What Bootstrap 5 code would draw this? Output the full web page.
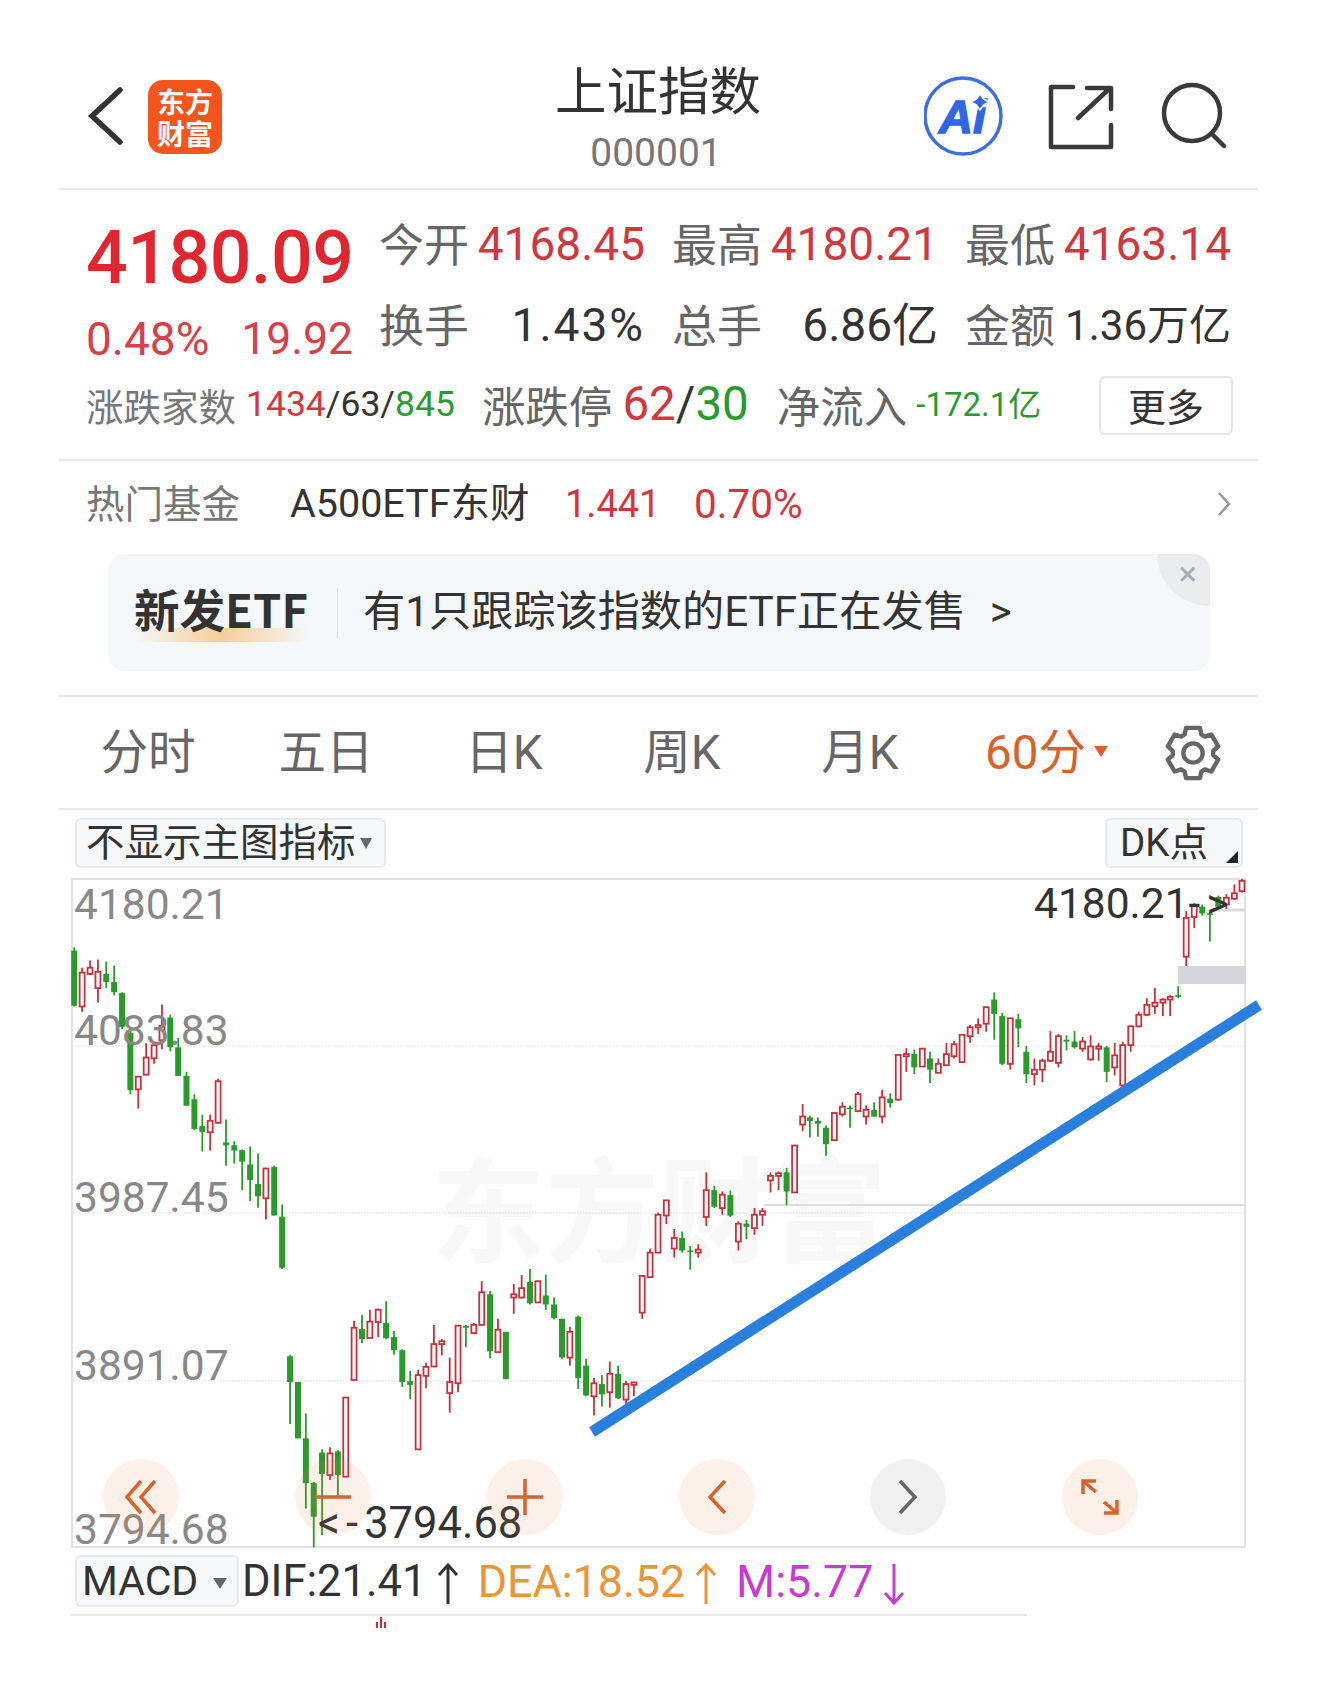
<!DOCTYPE html>
<html lang="zh">
<head>
    <meta charset="utf-8">
    <title>上证指数</title>
    <link href="https://cdn.jsdelivr.net/npm/bootstrap@5.3.0/dist/css/bootstrap.min.css" rel="stylesheet">
    <style>
        body { background: #fff; font-family: Roboto, "Noto Sans CJK SC", sans-serif; color: #333; overflow-x: hidden; }
        .page-wrap { width: 1199px; margin-left: 59px; height: 1685px; }
        .sep { border-bottom: 2px solid #e8e8e8; }

        .head-bar { height: 190px; padding: 0 28px; position: relative; }
        .back-ico { width: 36px; height: 58px; margin-top: 87px; }
        .logo-box { width: 74px; height: 74px; margin-left: 25px; margin-top: 80px; background: #f4551d; border-radius: 15px; color: #fff; font: 700 28px/32px "Noto Sans CJK SC", sans-serif; text-align: center; padding-top: 5px; }
        .head-title { position: absolute; left: 400px; width: 400px; top: 56px; text-align: center; }
        .head-title .t1 { font: 400 51.5px/64px "Noto Sans CJK SC", sans-serif; color: #333; margin-left: -2px; }
        .head-title .t2 { font-size: 39px; line-height: 46px; color: #777; margin-top: 10px; margin-left: -6px; }
        .head-icons { position: absolute; top: 75px; left: 865px; }

        .quote-sec { height: 271px; position: relative; padding: 18px 27px 0; }
        .price-big { font-size: 73.5px; line-height: 80px; font-weight: 500; color: #e0262e; letter-spacing: -.5px; margin-top: 10px; white-space: nowrap; }
        .price-sub { font-size: 46px; line-height: 50px; color: #d6404a; width: 267px; margin-top: 16px; }
        .price-sub .alt { font-size: 44.5px; }
        .quote-left { width: 294px; }
        .quote-grid { display: grid; grid-template-columns: 293px 293px 266px; grid-auto-rows: 81px; margin-top: -4px; }
        .q-cell { display: flex; justify-content: space-between; align-items: center; padding-right: 27px; height: 81px; font-size: 46px; white-space: nowrap; }
        .q-cell:nth-child(3n) { padding-right: 0; }
        .q-label { font: 400 45px/1 "Noto Sans CJK SC", sans-serif; color: #666; margin-bottom: 4px; }
        .c-red { color: #d1373f; }
        .c-green { color: #2a9a2f; }
        .c-dark { color: #333; }
        .wide-num { letter-spacing: 2px; }
        .q-amt { font-size: 42px; }
        .q-row3 { position: absolute; left: 27px; right: 25px; top: 186px; height: 58px; }
        .q-row3 .lb { color: #777; font: 400 37.5px/1 "Noto Sans CJK SC", sans-serif; }
        .q-row3 .nums { font-size: 35.5px; margin-left: 10px; margin-right: 27px; }
        .q-row3 .lb2 { color: #666; font: 400 43.5px/1 "Noto Sans CJK SC", sans-serif; }
        .q-row3 .big-num { font-size: 47.5px; margin-left: 10px; margin-right: 28px; }
        .q-row3 .flow { font-size: 33px; margin-left: 9px; }
        .more-btn { width: 134px; height: 59px; margin-left: auto; border: 2px solid #e6e6e6; border-radius: 6px; font: 400 38px/50px "Noto Sans CJK SC", sans-serif; color: #333; padding: 0; background: #fff; }

        .fund-sec { height: 236px; position: relative; }
        .fund-row { height: 86px; padding: 0 27px; font-size: 38px; white-space: nowrap; }
        .fund-row .lb { color: #777; font: 400 38.5px/1 "Noto Sans CJK SC", sans-serif; width: 204px; margin-bottom: 6px; }
        .fund-row .nm { width: 275px; color: #333; font-size: 39.5px; }
        .fund-row .v1 { width: 129px; }
        .fund-row .v2 { font-size: 40.5px; }
        .etf-box { position: relative; margin: 7px 48px 0 49px; height: 117px; background: #f5f8fa; border-radius: 16px; overflow: hidden; padding-left: 26px; }
        .etf-tag { position: relative; font: 700 45.5px/1 "Noto Sans CJK SC", sans-serif; color: #333; width: 203px; white-space: nowrap; }
        .etf-tag::after { content: ""; position: absolute; left: 0; right: 28px; bottom: -7px; height: 14px; background: linear-gradient(90deg, rgba(247,190,120,0) 0%, rgba(247,190,120,.75) 50%, rgba(247,190,120,0) 100%); }
        .etf-tag span { position: relative; z-index: 1; top: -4px; }
        .etf-line { width: 1px; height: 50px; background: #dcdfe1; margin-right: 25px; }
        .etf-txt { font: 400 42.2px/1 Roboto, "Noto Sans CJK SC", sans-serif; color: #333; white-space: nowrap; }
        .etf-close { position: absolute; right: 0; top: 0; width: 53px; height: 52px; background: #e9edef; border-bottom-left-radius: 53px 52px; color: #a8adb0; font-size: 34px; line-height: 38px; text-align: right; padding-right: 13px; }

        .tab-bar { height: 113px; }
        .tab-item { width: 178px; text-align: center; font: 400 47.5px/1 Roboto, "Noto Sans CJK SC", sans-serif; color: #666; white-space: nowrap; padding-top: 3px; }
        .tab-item.on { color: #d9622b; padding-left: 17px; }
        .tab-caret { display: inline-block; border: 7px solid transparent; border-top: 11px solid #d9622b; border-bottom: 0; vertical-align: 12px; margin-left: 8px; }
        .gear-ico { margin-left: 37px; }

        .tool-row { height: 68px; position: relative; padding: 8px 15px 0 16px; }
        .tool-btn { height: 50px; background: #f6f8f9; border: 2px solid #e6eaec; border-radius: 6px; font: 400 38.5px/46px Roboto, "Noto Sans CJK SC", sans-serif; color: #333; padding: 0 0 0 9px; white-space: nowrap; position: relative; }
        .tool-caret { display: inline-block; border: 6px solid transparent; border-top: 11px solid #666; border-bottom: 0; vertical-align: 7px; margin-left: 4px; margin-right: 12px; }
        .dk-btn { width: 138px; padding-left: 13px; text-align: left; }
        .dk-corner { position: absolute; right: 3px; bottom: 3px; border-left: 12px solid transparent; border-bottom: 12px solid #222; }

        .chart-box { position: relative; margin-left: 12px; width: 1175px; height: 670px; border: 2px solid #e2e2e2; }
        .chart-box svg.plot { position: absolute; left: -2px; top: -2px; overflow: visible; }
        .watermark { position: absolute; left: 358px; top: 267px; font: 700 114px/1 "Noto Sans CJK SC", sans-serif; color: #f8f8f8; white-space: nowrap; }
        .ax-lab { position: absolute; left: 1px; font-size: 42.5px; line-height: 50px; color: #888; }
        .call-lab { position: absolute; font-size: 42.5px; line-height: 50px; color: #333; white-space: nowrap; }
        .call-lab .gap-sp { letter-spacing: 6px; }
        .call-low { font-size: 43.5px; }
        .round-btn { position: absolute; top: 579px; width: 76px; height: 76px; border-radius: 50%; background: rgba(240,130,70,.12); display: flex; align-items: center; justify-content: center; padding: 0; border: 0; }
        .round-btn.off { background: rgba(120,120,120,.1); }

        .macd-row { height: 66px; padding: 7px 0 0 16px; font-size: 44.8px; white-space: nowrap; }
        .macd-row .m-val { line-height: 54px; }
        .macd-row .m-dif { font-size: 43.6px; }
        .macd-btn { width: 164px; height: 52px; background: #f6f8f9; border: 2px solid #e6eaec; border-radius: 6px; font: 400 41px/48px Roboto, sans-serif; color: #333; padding: 0 0 0 5px; margin-right: 3px; text-align: left; }
        .macd-caret { display: inline-block; border: 7px solid transparent; border-top: 11px solid #666; border-bottom: 0; vertical-align: 6px; margin-left: 15px; }
        .m-arrow { margin: 8px 19px 0 10px; }
        .c-dea { color: #e8963a; }
        .c-m { color: #c93bd0; }
        .sub-line { margin-left: 12px; width: 956px; border-top: 2px solid #e8e8e8; height: 14px; position: relative; overflow: hidden; }
        .sub-bar { position: absolute; left: 295px; top: 0; }
    </style>
</head>
<body>
<div class="page-wrap">

    <!-- 상단 -->
    <div class="head-bar sep d-flex align-items-start">
        <svg class="back-ico" viewBox="0 0 36 58"><polyline points="33,3 5,29 33,55" fill="none" stroke="#333" stroke-width="5.5" stroke-linecap="round"/></svg>
        <div class="logo-box">东方<br>财富</div>
        <div class="head-title">
            <div class="t1">上证指数</div>
            <div class="t2">000001</div>
        </div>
        <div class="head-icons d-flex align-items-center">
            <svg width="305" height="82" viewBox="0 0 305 82">
                <circle cx="39" cy="41" r="38" fill="#fff" stroke="#3d6fe0" stroke-width="3.5"/>
                <text x="15" y="58" font-family="Liberation Sans" font-weight="700" font-style="italic" font-size="47" fill="#2f66e6" stroke="#2f66e6" stroke-width="1.5">Ai</text>
                <polygon points="56,19 59.5,24 65,27 59.5,30 56,35 52.500,30 47,27 52.500,24" fill="#2f66e6" stroke="#fff" stroke-width="1.500"/>
                <path d="M149 12H127V72H187V50" fill="none" stroke="#3a3a3a" stroke-width="4.500" stroke-linecap="round" stroke-linejoin="round"/>
                <path d="M154 43L185 14M163 13H187V34" fill="none" stroke="#3a3a3a" stroke-width="4.500" stroke-linecap="round" stroke-linejoin="round"/>
                <circle cx="268" cy="38" r="28" fill="none" stroke="#3a3a3a" stroke-width="4.500"/>
                <line x1="288" y1="59" x2="300" y2="71" stroke="#3a3a3a" stroke-width="4.500" stroke-linecap="round"/>
            </svg>
        </div>
    </div>

    <!-- 시세 -->
    <div class="quote-sec sep d-flex">
        <div class="quote-left">
            <div class="price-big">4180.09</div>
            <div class="price-sub d-flex justify-content-between"><span>0.48%</span><span class="alt">19.92</span></div>
        </div>
        <div class="quote-grid">
            <div class="q-cell"><span class="q-label">今开</span><span class="c-red">4168.45</span></div>
            <div class="q-cell"><span class="q-label">最高</span><span class="c-red">4180.21</span></div>
            <div class="q-cell"><span class="q-label">最低</span><span class="c-red">4163.14</span></div>
            <div class="q-cell"><span class="q-label">换手</span><span class="c-dark wide-num">1.43%</span></div>
            <div class="q-cell"><span class="q-label">总手</span><span class="c-dark">6.86亿</span></div>
            <div class="q-cell"><span class="q-label">金额</span><span class="c-dark q-amt">1.36万亿</span></div>
        </div>
        <div class="q-row3 d-flex align-items-center">
            <span class="lb">涨跌家数</span>
            <span class="nums"><span class="c-red">1434</span>/63/<span class="c-green">845</span></span>
            <span class="lb2">涨跌停</span>
            <span class="big-num"><span class="c-red">62</span>/<span class="c-green">30</span></span>
            <span class="lb2">净流入</span>
            <span class="flow c-green">-172.1亿</span>
            <button class="btn more-btn">更多</button>
        </div>
    </div>

    <!-- 펀드 -->
    <div class="fund-sec sep">
        <div class="fund-row d-flex align-items-center">
            <span class="lb">热门基金</span>
            <span class="nm">A500ETF东财</span>
            <span class="v1 c-red">1.441</span>
            <span class="v2 c-red">0.70%</span>
            <svg class="ms-auto" width="14" height="26" viewBox="0 0 14 26"><polyline points="2,2 12,13 2,24" fill="none" stroke="#999" stroke-width="2.5"/></svg>
        </div>
        <div class="etf-box d-flex align-items-center">
            <div class="etf-tag"><span>新发ETF</span></div>
            <div class="etf-line"></div>
            <div class="etf-txt">有1只跟踪该指数的ETF正在发售</div>
            <div class="etf-txt ms-4">&gt;</div>
            <div class="etf-close">×</div>
        </div>
    </div>

    <!-- 주기 탭 -->
    <div class="tab-bar sep d-flex align-items-center">
        <div class="tab-item">分时</div>
        <div class="tab-item">五日</div>
        <div class="tab-item">日K</div>
        <div class="tab-item">周K</div>
        <div class="tab-item">月K</div>
        <div class="tab-item on">60分<span class="tab-caret"></span></div>
        <svg id="gear" class="gear-ico" width="58" height="60" viewBox="-30 -31 60 62" fill="none" stroke="#666" stroke-width="4.500" stroke-linejoin="round"></svg>
    </div>

    <div class="tool-row d-flex justify-content-between align-items-start">
        <button class="btn tool-btn">不显示主图指标<span class="tool-caret"></span></button>
        <button class="btn tool-btn dk-btn">DK点<span class="dk-corner"></span></button>
    </div>

    <!-- 차트 -->
    <div class="chart-box">
        <div class="watermark">东方财富</div>
        <svg id="plot" class="plot" width="1175" height="670" viewBox="71 877 1175 670"></svg>
        <div class="ax-lab" style="top:0">4180.21</div>
        <div class="ax-lab" style="top:126px">4083.83</div>
        <div class="ax-lab" style="top:293px">3987.45</div>
        <div class="ax-lab" style="top:461px">3891.07</div>
        <div class="ax-lab" style="top:625px">3794.68</div>
        <div class="call-lab" style="left:961px;top:-1px">4180.21<span class="gap-sp">-&gt;</span></div>
        <div class="call-lab call-low" style="left:245px;top:619px"><span class="gap-sp">&lt;-</span>3794.68</div>
        <button class="round-btn" style="left:30px"><svg width="34" height="36" viewBox="0 0 34 36" fill="none" stroke="#d9622b" stroke-width="3.5"><polyline points="17,2 3,18 17,34"/><polyline points="31,2 17,18 31,34"/></svg></button>
        <button class="round-btn" style="left:222px"><svg width="36" height="36" viewBox="0 0 36 36"><line x1="0" y1="18" x2="36" y2="18" stroke="#d9622b" stroke-width="3.5"/></svg></button>
        <button class="round-btn" style="left:414px"><svg width="36" height="36" viewBox="0 0 36 36" stroke="#d9622b" stroke-width="3.5"><line x1="0" y1="18" x2="36" y2="18"/><line x1="18" y1="0" x2="18" y2="36"/></svg></button>
        <button class="round-btn" style="left:606px"><svg width="20" height="36" viewBox="0 0 20 36"><polyline points="18,2 3,18 18,34" fill="none" stroke="#d9622b" stroke-width="3.5"/></svg></button>
        <button class="round-btn off" style="left:797px"><svg width="20" height="36" viewBox="0 0 20 36"><polyline points="2,2 17,18 2,34" fill="none" stroke="#666" stroke-width="3.5"/></svg></button>
        <button class="round-btn" style="left:989px"><svg width="38" height="36" viewBox="0 0 38 36" fill="none" stroke="#d9622b" stroke-width="3.5"><polyline points="2,15 2,2 15,2"/><line x1="2" y1="2" x2="15" y2="13"/><polyline points="36,21 36,34 23,34"/><line x1="36" y1="34" x2="23" y2="23"/></svg></button>
    </div>

    <div class="macd-row d-flex align-items-start">
        <button class="btn macd-btn">MACD<span class="macd-caret"></span></button>
        <span class="m-val m-dif">DIF:21.41</span><svg class="m-arrow" width="22" height="42" viewBox="0 0 22 42"><path d="M11 41V2M2 12L11 2L20 12" fill="none" stroke="#333" stroke-width="3"/></svg>
        <span class="m-val c-dea">DEA:18.52</span><svg class="m-arrow" width="22" height="42" viewBox="0 0 22 42"><path d="M11 41V2M2 12L11 2L20 12" fill="none" stroke="#e8963a" stroke-width="3"/></svg>
        <span class="m-val c-m">M:5.77</span><svg class="m-arrow" width="22" height="42" viewBox="0 0 22 42"><path d="M11 1V40M2 30L11 40L20 30" fill="none" stroke="#c93bd0" stroke-width="3"/></svg>
    </div>
    <div class="sub-line">
        <svg class="sub-bar" width="40" height="12" viewBox="0 0 40 12"><path d="M11 6V12M15 1V12M19 6V12" stroke="#c8303c" stroke-width="2"/></svg>
    </div>
</div>

<script>
    // [x, 윗꼬리, 몸통위, 몸통아래, 아랫꼬리, 색]  (앞쪽 구간)
    const leftBars = `36 40 48 183 185 g;56 90 102 185 198 r;76 72 90 105 108 r;96 70 100 140 175 r;117 75 105 125 140 g;137 85 125 150 158 g;157 150 152 235 240 g;178 240 250 390 400 g;198 355 357 388 435 r;218 275 310 352 352 r;238 275 280 312 325 r;258 180 232 268 290 r;279 205 212 285 295 g;299 262 285 355 355 g;320 345 355 428 428 g;340 400 412 485 488 g;360 450 478 492 540 g;380 450 465 493 538 r;400 362 368 470 470 r;420 462 518 525 575 g;441 515 525 538 570 g;461 535 537 565 635 g;481 528 572 610 662 g;501 545 620 650 678 g;521 580 582 655 707 r;542 575 578 697 697 g;562 670 700 825 828 g;582 1038 1042 1105 1208 g;602 1105 1105 1243 1243 g;622 1182 1243 1353 1415 g;642 1350 1352 1435 1510 g;663 1270 1278 1330 1480 g;683 1265 1280 1333 1345 r;703 1272 1275 1333 1388 g;723 1143 1143 1337 1337 r;744 955 972 1100 1100 r;764 940 975 1000 1010 g;784 928 957 997 997 r;805 925 928 958 995 r;825 907 960 998 1000 g;845 980 995 1027 1038 g;866 1025 1027 1105 1117 g;886 1078 1103 1112 1147 g;906 1075 1088 1270 1270 r;926 1058 1068 1090 1120 r;946 965 1012 1067 1067 r;966 1000 1005 1012 1040 r;986 1045 1105 1132 1180 r;1007 965 967 1108 1130 r;1027 965 968 972 1020 g;1047 960 965 985 988 r;1067 858 885 965 965 r;1088 882 890 1030 1047 g;1108 950 977 1032 1032 r;1128 982 982 1098 1098 g;1148 865 890 898 938 r;1168 843 875 898 900 r;1189 828 860 912 915 g;1209 857 858 910 910 r;1229 842 893 915 928 g;1250 898 915 948 952 g;1270 950 950 1045 1048 g;1290 970 982 1045 1065 r;1311 942 945 1095 1122 g;1331 1048 1065 1138 1140 g;1351 1095 1108 1140 1187 r;1371 1088 1110 1135 1165 g;1391 1055 1085 1130 1168 r;1412 1065 1085 1145 1147 g;1432 1102 1110 1148 1160 r;1452 1105 1106 1112 1140 r;1473 845 845 935 950 r;1493 778 788 848 848 r;1513 690 695 788 788 r;1534 660 660 697 718 r;1554 730 752 778 800 r`;
    // 뒤쪽 구간
    const rightBars = `105 808 822 850 855 g;125 840 850 852 893 g;145 836 848 855 866 r;165 675 715 775 795 r;185 705 715 752 755 g;205 718 725 755 770 r;225 716 726 772 775 g;245 785 790 830 850 r;265 782 790 797 825 g;285 755 770 800 815 r;305 755 762 770 795 r;325 675 683 693 720 r;345 673 677 683 715 r;365 665 675 718 748 g;385 615 615 720 720 r;405 522 550 568 583 r;423 548 552 560 597 g;443 552 560 566 595 g;463 570 575 612 638 g;484 540 542 603 605 r;504 518 528 545 550 r;523 525 530 532 575 g;543 495 500 538 540 r;563 525 535 550 568 r;583 518 535 550 550 g;603 490 507 550 565 r;623 498 510 520 530 g;643 410 412 512 515 r;663 397 410 415 450 r;683 400 410 440 455 g;703 397 398 438 438 r;722 405 420 445 475 g;743 420 432 452 452 r;763 385 410 435 435 r;782 380 388 415 420 r;802 365 367 428 428 r;822 345 350 370 385 r;842 330 345 350 365 r;862 305 305 342 360 r;882 272 288 320 378 g;902 318 325 432 435 g;922 330 330 432 445 r;942 320 332 352 395 g;962 392 405 455 475 g;982 420 445 455 480 r;1002 420 425 445 473 r;1022 358 405 425 428 r;1042 365 370 430 440 r;1062 368 378 382 402 g;1082 358 382 395 398 g;1102 372 382 398 405 r;1122 368 393 422 425 r;1142 385 393 398 425 r;1162 392 395 450 473 g;1182 385 413 440 458 r;1202 382 390 480 480 r;1222 345 348 390 405 r;1242 315 322 348 350 r;1262 285 300 322 325 r;1282 262 295 303 320 r;1302 285 288 295 325 r;1320 278 282 288 325 r;1340 258 278 282 285 g;1360 90 105 192 213 r;1380 72 78 103 128 r;1400 75 80 95 100 g;1419 92 95 97 158 g;1440 55 58 80 85 g;1460 52 60 75 85 r;1480 30 50 62 65 r;1499 18 22 45 48 r`;

    function candle(x, wt, bt, bb, wb, c) {
        const col = c === 'r' ? '#c8303c' : '#2a9a2a';
        const w = 5;
        let s = `<line x1="${x}" x2="${x}" y1="${wt}" y2="${wb}" stroke="${col}" stroke-width="1.8"/>`;
        const h = Math.max(bb - bt, 1.5);
        if (c === 'r') {
            s += `<rect x="${x - w / 2}" y="${bt}" width="${w}" height="${h}" fill="#fff" stroke="${col}" stroke-width="1.8"/>`;
        } else {
            s += `<rect x="${x - w / 2 - .5}" y="${bt}" width="${w + 1}" height="${h}" fill="${col}"/>`;
        }
        return s;
    }

    function drawBars(text, sx, ox, sy, oy) {
        return text.split(';').map(r => {
            const p = r.split(' ');
            const n = p.slice(0, 5).map(Number);
            return candle(ox + n[0] / sx, oy + n[1] / sy, oy + n[2] / sy, oy + n[3] / sy, oy + n[4] / sy, p[5]);
        }).join('');
    }

    let svg = '';
    [1045, 1212, 1380].forEach(y => {
        svg += `<line x1="73" x2="1246" y1="${y}" y2="${y}" stroke="#ddd" stroke-width="1" stroke-dasharray="1.5 1.5"/>`;
    });
    svg += '<line x1="764" x2="1246" y1="1204" y2="1204" stroke="#dcdcdc" stroke-width="2"/>';
    svg += '<rect x="1178" y="965" width="68" height="18" fill="#d5d5dc"/>';
    svg += '<line x1="1210" x2="1246" y1="909" y2="909" stroke="#dcdcdc" stroke-width="3"/>';
    svg += drawBars(leftBars, 2.53, 60, 2.45, 930);
    svg += drawBars(rightBars, 2.49, 640, 2.24, 870);
    svg += '<line x1="592" y1="1431" x2="1259" y2="1004" stroke="#2b7fdc" stroke-width="11"/>';
    document.getElementById('plot').innerHTML = svg;

    // 톱니바퀴 아이콘
    let d = '';
    for (let i = 0; i < 6; i++) {
        const t = (i * 60 - 90) * Math.PI / 180;
        [[21, -.42], [27, -.27], [27, .27], [21, .42]].forEach(([r, a], j) => {
            const px = (r * Math.cos(t + a)).toFixed(1), py = (r * Math.sin(t + a)).toFixed(1);
            d += (i === 0 && j === 0 ? 'M' : 'L') + px + ' ' + py;
        });
    }
    document.getElementById('gear').innerHTML = `<path d="${d}Z"/><circle r="10"/>`;
</script>
</body>
</html>
